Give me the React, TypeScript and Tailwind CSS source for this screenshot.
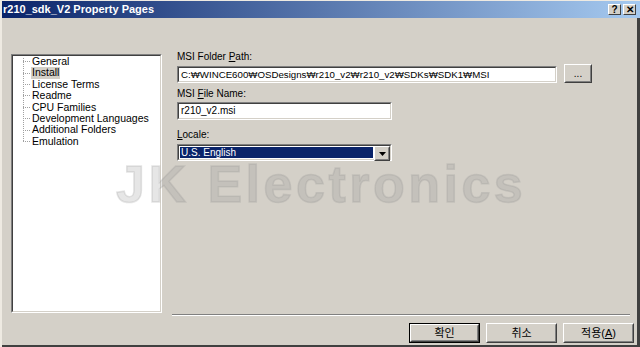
const ui = "font-['Liberation_Sans','Noto_Sans_CJK_KR',sans-serif]";

const pages = [
    "General",
    "Install",
    "License Terms",
    "Readme",
    "CPU Families",
    "Development Languages",
    "Additional Folders",
    "Emulation",
];

function Sunken({ className, children }: { className: string; children?: React.ReactNode }) {
    return (
        <div className={`border border-t-[#808080] border-l-[#808080] border-b-white border-r-white ${className}`}>
            <div className="h-full w-full border border-t-[#404040] border-l-[#404040] border-b-[#d4d0c8] border-r-[#d4d0c8] bg-white">
                {children}
            </div>
        </div>
    );
}

function Raised({ className, children }: { className: string; children?: React.ReactNode }) {
    return (
        <div className={`border border-t-white border-l-white border-b-[#404040] border-r-[#404040] bg-[#d4d0c8] ${className}`}>
            <div className="flex h-full w-full items-center justify-center border border-t-[#d4d0c8] border-l-[#d4d0c8] border-b-[#808080] border-r-[#808080]">
                {children}
            </div>
        </div>
    );
}

function Caption({ children }: { children: React.ReactNode }) {
    return (
        <div className="flex h-[11px] w-[13px] items-center justify-center border border-t-white border-l-white border-b-[#404040] border-r-[#404040] bg-[#d4d0c8] text-[10px] font-bold leading-none text-black">
            {children}
        </div>
    );
}

export default function App() {
    return (
        <div className={`relative flex h-[347px] w-[640px] flex-col overflow-hidden border-l-2 border-t border-l-[#eeeae2] border-t-[#eeeae2] bg-[#d4d0c8] ${ui}`}>
            <div className="flex h-[17px] shrink-0 items-center justify-between bg-[linear-gradient(to_right,#0a246a,#a6caf0)] pl-[1px] pr-[4px]">
                <span className="text-[11px] font-bold leading-none text-white">r210_sdk_V2 Property Pages</span>
                <div className="flex gap-[2px]">
                    <Caption>?</Caption>
                    <Caption>✕</Caption>
                </div>
            </div>

            <div className="flex flex-1 flex-col border-r-[3px] border-b-[2px] border-r-[#404040] border-b-[#404040]">
                <div className="mt-[33px] flex pl-[9px]">
                    <Sunken className="mt-[3px] h-[259px] w-[151px]">
                        <div className="relative pl-[18px] text-[10.5px] leading-[11.4px] text-black">
                            <div className="absolute left-[10px] top-[2px] h-[83px] border-l border-dotted border-[#a0a0a0]" />
                            {pages.map((p) => (
                                <div key={p} className="relative flex h-[11.4px] items-center">
                                    <div className="absolute left-[-8px] w-[7px] border-t border-dotted border-[#a0a0a0]" />
                                    <span className={p === "Install" ? "bg-[#d4d0c8] px-[1px]" : "px-[1px]"}>{p}</span>
                                </div>
                            ))}
                        </div>
                    </Sunken>

                    <div className="ml-[10px] flex h-[265px] w-[458px] flex-col border-b border-b-white">
                        <div className="flex h-full flex-col border-b border-b-[#808080] pl-[5px] text-[10px] leading-[12px] text-black">
                            <div>MSI Folder <u>P</u>ath:</div>
                            <div className="mt-[1px] flex items-center">
                                <Sunken className="mt-[1px] h-[17px] w-[380px]">
                                    <div className="pl-[2px] text-[9.7px] leading-[13px]">C:₩WINCE600₩OSDesigns₩r210_v2₩r210_v2₩SDKs₩SDK1₩MSI</div>
                                </Sunken>
                                <Raised className="ml-[7px] h-[19px] w-[28px]">
                                    <span className="text-[10px] leading-none">...</span>
                                </Raised>
                            </div>
                            <div className="mt-[5px]">MSI <u>F</u>ile Name:</div>
                            <Sunken className="mt-[2px] h-[18px] w-[215px]">
                                <div className="pl-[2px] leading-[14px]">r210_v2.msi</div>
                            </Sunken>
                            <div className="mt-[9px]"><u>L</u>ocale:</div>
                            <Sunken className="mt-[3px] h-[17px] w-[215px]">
                                <div className="flex h-full items-stretch">
                                    <div className="m-[1px] flex-1 bg-[#0a246a] pl-[1px] leading-[11px] text-white">U.S. English</div>
                                    <Raised className="h-[15px] w-[16px]">
                                        <svg width="7" height="4" viewBox="0 0 7 4"><path d="M0 0h7L3.5 4z" fill="#000" /></svg>
                                    </Raised>
                                </div>
                            </Sunken>
                        </div>
                    </div>
                </div>

                <div className="mt-[7px] flex justify-end gap-[6px] pr-[3px] text-[11px] text-black">
                    <div className="border border-black">
                        <Raised className="h-[18px] w-[69px]">확인</Raised>
                    </div>
                    <Raised className="h-[20px] w-[71px]">취소</Raised>
                    <Raised className="h-[20px] w-[71px]">적용(<u>A</u>)</Raised>
                </div>
            </div>

            <div className="pointer-events-none absolute left-[114px] top-[157px] text-[52px] font-bold leading-none tracking-[3.5px] text-[rgba(140,140,140,0.22)] [-webkit-text-stroke:1.5px_rgba(140,140,140,0.22)] font-['Liberation_Sans',sans-serif]">
                JK Electronics
            </div>
        </div>
    );
}
